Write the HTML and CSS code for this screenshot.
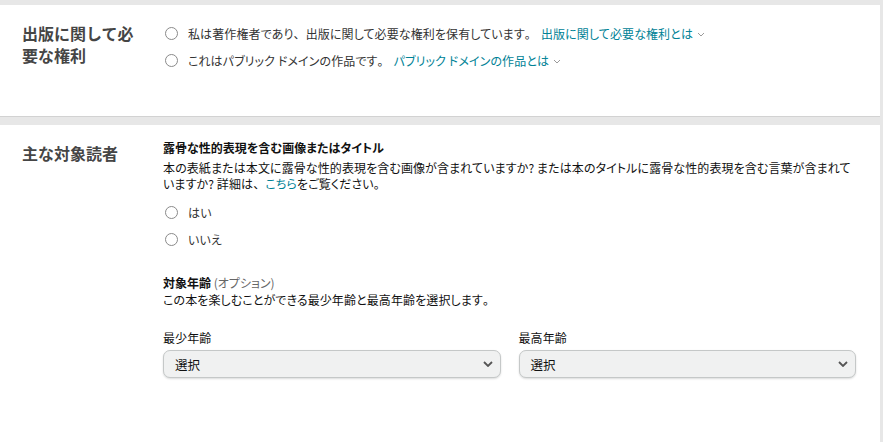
FILE: index.html
```html
<!DOCTYPE html>
<html lang="ja">
<head>
<meta charset="utf-8">
<link rel="stylesheet" href="styles.css">
</head>
<body>
<div class="page">
  <section class="section section-rights">
    <h2 class="section-title">出版に関して必要な権利</h2>
    <div class="section-body">
      <label class="radio-row"><span class="radio"></span><span>私は著作権者であり<span class="fw">、</span>出版に関して必要な権利を保有しています<span class="fw">。</span></span><a class="link">出版に関して必要な権利とは<svg class="chev" viewBox="0 0 8 5" width="8" height="5"><path d="M1 1l3 3 3-3" fill="none" stroke="#9a9a9a" stroke-width="1"/></svg></a></label>
      <label class="radio-row"><span class="radio"></span><span>これはパブリック ドメインの作品です<span class="fw">。</span></span><a class="link">パブリック ドメインの作品とは<svg class="chev" viewBox="0 0 8 5" width="8" height="5"><path d="M1 1l3 3 3-3" fill="none" stroke="#9a9a9a" stroke-width="1"/></svg></a></label>
    </div>
  </section>
  <section class="section section-audience">
    <h2 class="section-title title-2">主な対象読者</h2>
    <div class="section-body">
      <div class="field-title">露骨な性的表現を含む画像またはタイトル</div>
      <p class="desc">本の表紙または本文に露骨な性的表現を含む画像が含まれていますか? または本のタイトルに露骨な性的表現を含む言葉が含まれていますか? 詳細は<span class="fw">、</span><a class="link">こちら</a>をご覧ください<span class="fw">。</span></p>
      <div class="radios">
        <label class="radio-row"><span class="radio"></span><span>はい</span></label>
        <label class="radio-row"><span class="radio"></span><span>いいえ</span></label>
      </div>
      <div class="field-title age-title">対象年齢 <span class="optional">(オプション)</span></div>
      <p class="desc desc-age">この本を楽しむことができる最少年齢と最高年齢を選択します<span class="fw">。</span></p>
      <div class="selects">
        <div class="select-field">
          <div class="select-label">最少年齢</div>
          <div class="select"><span>選択</span><svg viewBox="0 0 10 6" width="10" height="6"><path d="M1 1l4 4 4-4" fill="none" stroke="#555" stroke-width="1.8"/></svg></div>
        </div>
        <div class="select-field">
          <div class="select-label">最高年齢</div>
          <div class="select"><span>選択</span><svg viewBox="0 0 10 6" width="10" height="6"><path d="M1 1l4 4 4-4" fill="none" stroke="#555" stroke-width="1.8"/></svg></div>
        </div>
      </div>
    </div>
  </section>
</div>
</body>
</html>
```
FILE: styles.css
```css
* { box-sizing: border-box; }
html, body { margin: 0; padding: 0; }
body {
  background: #e7e7e7;
  font-family: "Noto Sans CJK JP", "Noto Sans", sans-serif;
  font-size: 12px;
  color: #111;
  font-feature-settings: "palt";
  letter-spacing: 0.1px;
}
.fw { font-feature-settings: normal; }
.page {
  padding: 5px 3px 0 0;
  height: 442px;
  overflow: hidden;
}
.section {
  background: #fff;
  display: grid;
  grid-template-columns: 141px 1fr;
  padding: 0 24px 0 22px;
}
.section-rights {
  height: 112px;
  border-bottom: 1px solid #d2d2d2;
  margin-bottom: 8px;
  padding-top: 17px;
}
.section-audience {
  height: 330px;
  padding-top: 15px;
}
.section-title {
  margin: 0;
  font-size: 16px;
  line-height: 22px;
  font-weight: 700;
  color: #454545;
  width: 120px;
  font-feature-settings: normal;
  letter-spacing: 0;
}
.title-2 { padding-top: 2px; }
.section-body { min-width: 0; }
.radio-row {
  display: flex;
  align-items: center;
  height: 27px;
  color: #333;
  white-space: nowrap;
}
.section-rights .radio-row:first-child { margin-top: -2px; }
.radio {
  width: 13px;
  height: 13px;
  border: 1px solid #8a8a8a;
  border-radius: 50%;
  margin: 0 10px 0 2px;
  flex: none;
}
.link {
  color: #008296;
  margin-left: 4px;
}
.desc .link { margin-left: 0; }
.chev { margin-left: 4px; vertical-align: middle; position: relative; top: -1px; }
.field-title {
  font-weight: 700;
  line-height: 16px;
  color: #111;
  letter-spacing: 0;
}
.desc {
  margin: 4px 0 0;
  line-height: 16px;
  color: #111;
}
.radios { margin-top: 7px; }
.age-title { margin-top: 22px; }
.optional { font-weight: 400; color: #666; }
.desc-age { margin-top: 1px; }
.selects {
  display: grid;
  grid-template-columns: 1fr 1fr;
  gap: 18px;
  margin-top: 22px;
}
.select-label { line-height: 16px; color: #111; }
.select {
  margin-top: 4px;
  height: 28px;
  background: #f0f1f1;
  border: 1px solid #c5c8c8;
  border-radius: 7px;
  box-shadow: 0 1px 2px rgba(15,17,17,0.15);
  display: flex;
  align-items: center;
  justify-content: space-between;
  padding: 0 7px 0 11px;
  color: #111;
  font-size: 12.5px;
}
```
